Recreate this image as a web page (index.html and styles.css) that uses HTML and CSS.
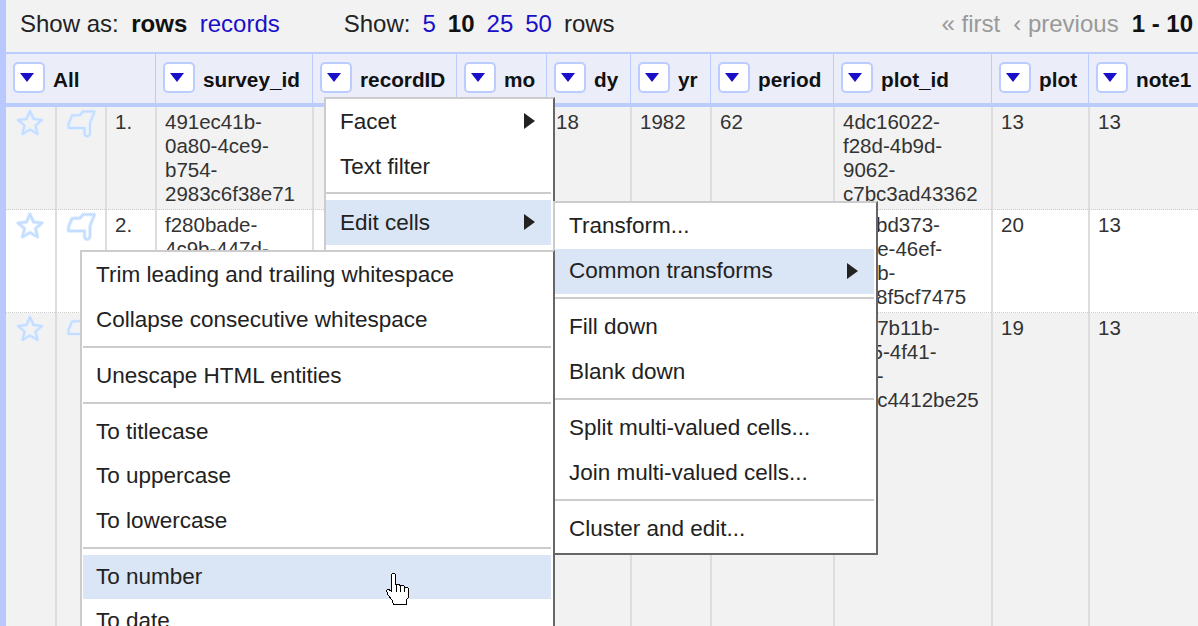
FILE: index.html
```html
<!DOCTYPE html>
<html lang="en">
<head>
    <meta charset="UTF-8">
    <meta name="viewport" content="width=device-width, initial-scale=1.0">
    <title>OpenRefine</title>
    <link rel="stylesheet" href="styles.css">
</head>
<body>
    <svg class="defs" width="0" height="0">
        <symbol id="star" viewBox="0 0 30 30">
            <path class="halo" d="M15 3 L18.5 11 L27 12 L20.5 17.5 L22.5 26 L15 21.5 L7.5 26 L9.5 17.5 L3 12 L11.5 11 Z"/>
            <path class="line" d="M15 3 L18.5 11 L27 12 L20.5 17.5 L22.5 26 L15 21.5 L7.5 26 L9.5 17.5 L3 12 L11.5 11 Z"/>
        </symbol>
        <symbol id="flag" viewBox="0 0 30 30">
            <path class="halo" d="M6 7.500 L14 7 L17 3.500 L28.500 3.500 L24 15 L24 26 Q21 31 18.500 26 L18.500 20 L2.500 20 L2.500 16 Z"/>
            <path class="line" d="M6 7.500 L14 7 L17 3.500 L28.500 3.500 L24 15 L24 26 Q21 31 18.500 26 L18.500 20 L2.500 20 L2.500 16 Z"/>
        </symbol>
    </svg>

    <div class="sidebar"></div>

    <div class="main">
        <div class="viewbar">
            <span class="viewbar-group show-as">
                <span>Show as:</span>
                <b>rows</b>
                <a href="#">records</a>
            </span>
            <span class="viewbar-group page-size">
                <span>Show:</span>
                <a href="#">5</a>
                <b>10</b>
                <a href="#">25</a>
                <a href="#">50</a>
                <span>rows</span>
            </span>
            <span class="viewbar-group pager">
                <span class="muted">« first</span>
                <span class="muted">‹ previous</span>
                <b>1 - 10</b>
            </span>
        </div>

        <table class="data-table">
            <colgroup>
                <col class="col-star"><col class="col-flag"><col class="col-index">
                <col class="col-survey"><col class="col-record"><col class="col-mo">
                <col class="col-dy"><col class="col-yr"><col class="col-period">
                <col class="col-plotid"><col class="col-plot"><col class="col-note">
            </colgroup>
            <thead>
                <tr>
                    <th colspan="3"><div class="head"><span class="drop"></span>All</div></th>
                    <th><div class="head"><span class="drop"></span>survey_id</div></th>
                    <th><div class="head"><span class="drop"></span>recordID</div></th>
                    <th><div class="head"><span class="drop"></span>mo</div></th>
                    <th><div class="head"><span class="drop"></span>dy</div></th>
                    <th><div class="head"><span class="drop"></span>yr</div></th>
                    <th><div class="head"><span class="drop"></span>period</div></th>
                    <th><div class="head"><span class="drop"></span>plot_id</div></th>
                    <th><div class="head"><span class="drop"></span>plot</div></th>
                    <th><div class="head"><span class="drop"></span>note1</div></th>
                </tr>
            </thead>
            <tbody>
                <tr class="odd">
                    <td class="icon"><svg width="30" height="30"><use href="#star"/></svg></td>
                    <td class="icon"><svg width="30" height="30"><use href="#flag"/></svg></td>
                    <td>1.</td>
                    <td>491ec41b-<br>0a80-4ce9-<br>b754-<br>2983c6f38e71</td>
                    <td></td>
                    <td></td>
                    <td>18</td>
                    <td>1982</td>
                    <td>62</td>
                    <td>4dc16022-<br>f28d-4b9d-<br>9062-<br>c7bc3ad43362</td>
                    <td>13</td>
                    <td>13</td>
                </tr>
                <tr class="even">
                    <td class="icon"><svg width="30" height="30"><use href="#star"/></svg></td>
                    <td class="icon"><svg width="30" height="30"><use href="#flag"/></svg></td>
                    <td>2.</td>
                    <td>f280bade-<br>4c9b-447d-<br>af8e-<br>ab5bb2f4b1a9</td>
                    <td></td>
                    <td></td>
                    <td></td>
                    <td></td>
                    <td></td>
                    <td>3ecbd373-<br>91ae-46ef-<br>8a0b-<br>c0e8f5cf7475</td>
                    <td>20</td>
                    <td>13</td>
                </tr>
                <tr class="odd last">
                    <td class="icon"><svg width="30" height="30"><use href="#star"/></svg></td>
                    <td class="icon"><svg width="30" height="30"><use href="#flag"/></svg></td>
                    <td></td>
                    <td></td>
                    <td></td>
                    <td></td>
                    <td></td>
                    <td></td>
                    <td></td>
                    <td>0a97b11b-<br>1f65-4f41-<br>9ff2-<br>6e0c4412be25</td>
                    <td>19</td>
                    <td>13</td>
                </tr>
            </tbody>
        </table>
    </div>

    <div class="menu menu-column">
        <div class="menu-item has-sub">Facet</div>
        <div class="menu-item">Text filter</div>
        <div class="menu-sep"></div>
        <div class="menu-item has-sub active">Edit cells</div>
    </div>

    <div class="menu menu-edit">
        <div class="menu-item">Transform...</div>
        <div class="menu-item has-sub active">Common transforms</div>
        <div class="menu-sep"></div>
        <div class="menu-item">Fill down</div>
        <div class="menu-item">Blank down</div>
        <div class="menu-sep"></div>
        <div class="menu-item">Split multi-valued cells...</div>
        <div class="menu-item">Join multi-valued cells...</div>
        <div class="menu-sep"></div>
        <div class="menu-item">Cluster and edit...</div>
    </div>

    <div class="menu menu-transforms">
        <div class="menu-item">Trim leading and trailing whitespace</div>
        <div class="menu-item">Collapse consecutive whitespace</div>
        <div class="menu-sep"></div>
        <div class="menu-item">Unescape HTML entities</div>
        <div class="menu-sep"></div>
        <div class="menu-item">To titlecase</div>
        <div class="menu-item">To uppercase</div>
        <div class="menu-item">To lowercase</div>
        <div class="menu-sep"></div>
        <div class="menu-item active">To number</div>
        <div class="menu-item">To date</div>
    </div>

    <svg class="cursor" width="28" height="36" viewBox="0 0 28 36">
        <path d="M7.5 20.5 L7.5 4 Q7.5 2.5 9.5 2.5 Q11.5 2.5 11.5 4 L11.5 13.5 L15 13.5 L16 14.5 L19.5 14.5 L20.5 16 L23.5 16 L24.5 18 L24.5 26 L22.5 29 L22.5 33.5 L9.5 33.5 L8.5 30 L3.5 23 L2.5 19.5 L3.5 18.5 L5 18.5 Z"/>
        <path d="M12 14 V21 M16 15 V21 M20.5 16 V21"/>
    </svg>
</body>
</html>
```

FILE: styles.css
```css
* {
    box-sizing: border-box;
}

html, body {
    height: 100%;
}

body {
    margin: 0;
    display: flex;
    overflow: hidden;
    position: relative;
    background-color: #f2f2f2;
    color: #333;
    font-family: "Liberation Sans", Arial, sans-serif;
    font-size: 20.5px;
}

.defs {
    position: absolute;
}

.halo, .line {
    fill: none;
    stroke-linejoin: round;
}

.halo {
    stroke: #e3f0ff;
    stroke-width: 4;
}

.line {
    stroke: #c3dcff;
    stroke-width: 2;
}

.sidebar {
    width: 6px;
    flex: none;
    background-color: #b9c9ff;
}

.main {
    flex: 1;
    min-width: 0;
}

/* top bar */
.viewbar {
    height: 52px;
    padding: 0 0 4px 14px;
    display: flex;
    align-items: center;
    font-size: 24px;
    color: #222;
    white-space: nowrap;
}

.viewbar-group {
    display: flex;
    gap: 12px;
}

.viewbar b {
    color: #111;
}

.viewbar a {
    color: #1a0fc8;
    text-decoration: none;
}

.show-as {
    gap: 12.5px;
}

.page-size {
    margin-left: 64px;
}

.pager {
    margin-left: auto;
    margin-right: 5px;
    gap: 13px;
}

.muted {
    color: #999;
}

/* table */
.data-table {
    width: 1192px;
    table-layout: fixed;
    border-collapse: separate;
    border-spacing: 0;
}

.col-star { width: 49px; }
.col-flag { width: 50px; }
.col-index { width: 50px; }
.col-survey { width: 157px; }
.col-record { width: 144px; }
.col-mo { width: 90px; }
.col-dy { width: 84px; }
.col-yr { width: 80px; }
.col-period { width: 123px; }
.col-plotid { width: 158px; }
.col-plot { width: 97px; }
.col-note { width: 110px; }

.data-table th {
    height: 55px;
    padding: 0 0 0 7px;
    background-color: #ebedf9;
    border-top: 2px solid #bbccff;
    border-bottom: 4px solid #bbccff;
    border-left: 1px solid #bbccff;
    text-align: left;
    color: #111;
    font-size: 20.75px;
    overflow: hidden;
}

.data-table th:first-child {
    border-left: 0;
}

.head {
    display: flex;
    align-items: center;
    gap: 8px;
    padding-top: 2px;
    white-space: nowrap;
}

.drop {
    position: relative;
    width: 32px;
    height: 31px;
    flex: none;
    margin-top: -4px;
    background-color: #fff;
    border: 2px solid #bbccff;
    border-radius: 5px;
}

.drop::after {
    content: "";
    position: absolute;
    left: 5px;
    top: 9px;
    border-style: solid;
    border-width: 9px 7.5px 0;
    border-color: #1a0fc8 transparent transparent;
}

.data-table td {
    height: 103px;
    padding: 3px 4px 3px 8px;
    border-left: 2px solid #ddd;
    border-bottom: 1px dotted #ccc;
    vertical-align: top;
    line-height: 24px;
    overflow: hidden;
}

.data-table td:first-child {
    border-left: 0;
}

.even td {
    background-color: #fff;
}

.last td {
    height: 330px;
    border-bottom: 0;
}

.data-table td.icon {
    padding: 1px 0 0 9px;
}

.icon svg {
    display: block;
}

/* menus */
.menu {
    position: absolute;
    padding: 0 2px 2px 1px;
    background-color: #fff;
    border: 2px solid;
    border-color: #ccc #666 #666 #ccc;
    color: #222;
    font-size: 22.5px;
    white-space: nowrap;
}

.menu-column {
    left: 324px;
    top: 97px;
    width: 231px;
    height: 160px;
    padding-left: 0;
    z-index: 1;
}

.menu-edit {
    left: 553px;
    top: 201px;
    width: 325px;
    padding: 1px 2px 1px 0;
    z-index: 2;
}

.menu-transforms {
    left: 80px;
    top: 250px;
    width: 475px;
    padding-top: 1.25px;
    z-index: 3;
}

.menu-item {
    position: relative;
    height: 45px;
    padding: 0 16px 0 13px;
    line-height: 45px;
}

.menu-column .menu-item,
.menu-edit .menu-item {
    padding-left: 14px;
}

.menu-edit .menu-item {
    line-height: 43px;
}

.menu-transforms .menu-item {
    height: 44.5px;
    line-height: 43px;
}

.menu-item.active {
    background-color: #dae6f5;
}

.has-sub::after {
    content: "";
    position: absolute;
    right: 16px;
    top: 14px;
    border-style: solid;
    border-width: 8px 0 8px 11px;
    border-color: transparent transparent transparent #222;
}

.menu-sep {
    height: 2px;
    margin: 3px 0 6px;
    background-color: #ccc;
}

.menu-transforms .menu-sep {
    margin-top: 3.5px;
}

.cursor {
    position: absolute;
    left: 384px;
    top: 571px;
    z-index: 4;
    shape-rendering: crispEdges;
}

.cursor path:first-child {
    fill: #fff;
    stroke: #000;
}

.cursor path:last-child {
    fill: none;
    stroke: #000;
}
```
